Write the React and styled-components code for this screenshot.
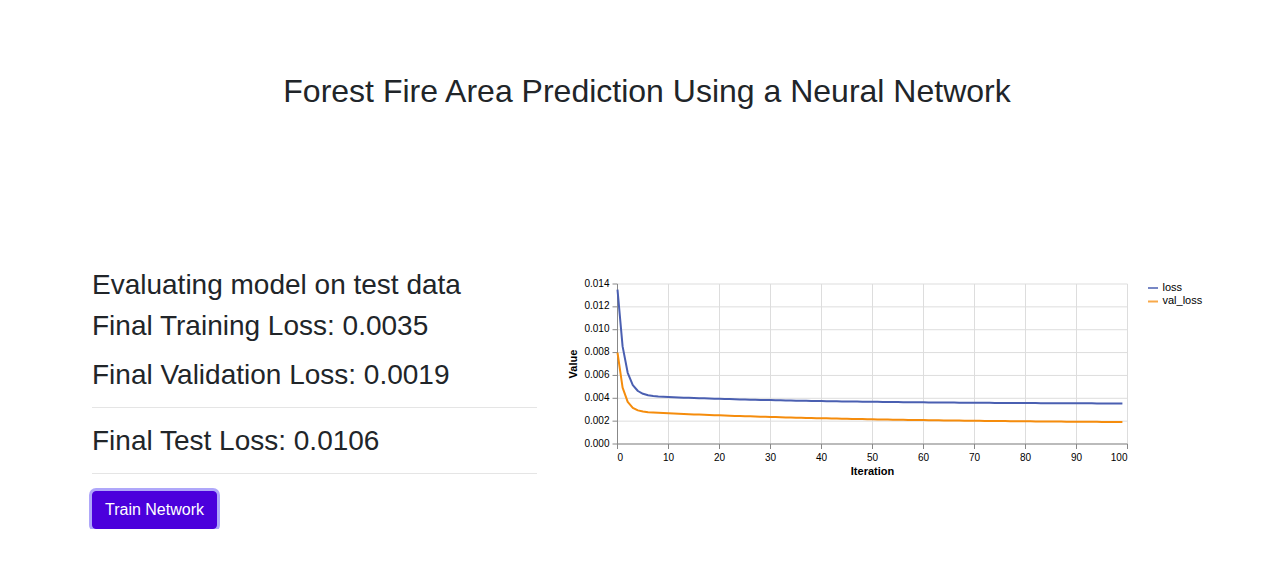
import React, { useMemo } from 'react';
import styled, { createGlobalStyle } from 'styled-components';

const GlobalStyle = createGlobalStyle`
    body {
        margin: 0 ;
        background: #fff ;
        color: #212529 ;
        font-family: "Liberation Sans", Arial, sans-serif ;
    }
`;

// training history, 100 epochs
const history = Array.from({ length: 100 }, (_, i) => ({
    loss: 0.0035 + 0.0008 * Math.exp(-i / 35) + 0.0092 * Math.exp(-i / 1.3),
    val_loss: 0.0018 + 0.0011 * Math.exp(-i / 45) + 0.0051 * Math.exp(-i / 1.1),
}));

const PLOT = { x: 57.5, y: 11, w: 510, h: 160 };
const Y_MAX = 0.014;

const px = (i) => PLOT.x + (i / 100) * PLOT.w;
const py = (v) => PLOT.y + PLOT.h - (v / Y_MAX) * PLOT.h;

const SERIES = [
    { key: 'loss', color: '#4a5fb1' },
    { key: 'val_loss', color: '#f58c0c' },
];

function LossChart() {
    const paths = useMemo(() => SERIES.map((s) => ({
        ...s,
        d: history.map((h, i) => `${i ? 'L' : 'M'}${px(i).toFixed(2)},${py(h[s.key]).toFixed(2)}`).join(''),
    })), []);

    const xTicks = Array.from({ length: 11 }, (_, i) => i * 10);
    const yTicks = Array.from({ length: 8 }, (_, i) => i * 0.002);

    // first and last x labels are flushed to the plot edges
    const xAnchor = (t) => (t === 0 ? 'start' : t === 100 ? 'end' : 'middle');

    return (
        <ChartSvg width="660" height="215" viewBox="0 0 660 215">
            {xTicks.map((t) => (
                <line key={'gx' + t} x1={px(t)} x2={px(t)} y1={PLOT.y} y2={PLOT.y + PLOT.h} stroke="#ddd" />
            ))}
            {yTicks.map((t) => (
                <line key={'gy' + t} x1={PLOT.x} x2={PLOT.x + PLOT.w} y1={py(t)} y2={py(t)} stroke="#ddd" />
            ))}

            <line x1={PLOT.x} x2={PLOT.x} y1={PLOT.y} y2={PLOT.y + PLOT.h} stroke="#888" />
            <line x1={PLOT.x} x2={PLOT.x + PLOT.w} y1={PLOT.y + PLOT.h} y2={PLOT.y + PLOT.h} stroke="#888" />

            {yTicks.map((t) => (
                <g key={'ty' + t}>
                    <line x1={PLOT.x - 5} x2={PLOT.x} y1={py(t)} y2={py(t)} stroke="#888" />
                    <TickLabel x={PLOT.x - 8} y={py(t)} textAnchor="end" dominantBaseline="middle">
                        {t.toFixed(3)}
                    </TickLabel>
                </g>
            ))}
            {xTicks.map((t) => (
                <g key={'tx' + t}>
                    <line x1={px(t)} x2={px(t)} y1={PLOT.y + PLOT.h} y2={PLOT.y + PLOT.h + 5} stroke="#888" />
                    <TickLabel x={px(t)} y={PLOT.y + PLOT.h + 16.5} textAnchor={xAnchor(t)}>{t}</TickLabel>
                </g>
            ))}

            <AxisTitle x={PLOT.x + PLOT.w / 2} y={202} textAnchor="middle">Iteration</AxisTitle>
            <AxisTitle x={17} y={PLOT.y + PLOT.h / 2} textAnchor="middle" transform={`rotate(-90 17 ${PLOT.y + PLOT.h / 2})`}>
                Value
            </AxisTitle>

            {paths.map((p) => (
                <path key={p.key} d={p.d} fill="none" stroke={p.color} strokeWidth="2" strokeLinejoin="round" />
            ))}

            {SERIES.map((s, i) => (
                <g key={'lg' + s.key}>
                    <line x1={588} x2={598} y1={15 + i * 13.5} y2={15 + i * 13.5} stroke={s.color} strokeWidth="2" strokeOpacity="0.75" />
                    <LegendLabel x={602.5} y={15 + i * 13.5} dominantBaseline="middle">{s.key}</LegendLabel>
                </g>
            ))}
        </ChartSvg>
    );
}

function App() {
    return (
        <Page>
            <GlobalStyle />
            <Title>Forest Fire Area Prediction Using a Neural Network</Title>
            <Container>
                <Results>
                    <Stat $gap={7}>Evaluating model on test data</Stat>
                    <Stat $gap={15}>Final Training Loss: 0.0035</Stat>
                    <Stat>Final Validation Loss: 0.0019</Stat>
                    <Rule $top={16} $bottom={16} />
                    <Stat>Final Test Loss: 0.0106</Stat>
                    <Rule $top={15} $bottom={17} />
                    <TrainButton type="button">Train Network</TrainButton>
                </Results>
                <ChartArea>
                    <LossChart />
                </ChartArea>
            </Container>
        </Page>
    );
}

const Page = styled.div`
    display: flex ;
    flex-direction: column ;
    padding-top: 72px ;
`;
const Title = styled.h2`
    margin: 0 ;
    padding-left: 24px ;
    font-size: 32px ;
    font-weight: 400 ;
    line-height: 1.2 ;
    text-align: center ;
    color: #212529 ;
`;
const Container = styled.div`
    display: flex ;
    align-items: flex-start ;
    gap: 23px ;
    width: 1086px ;
    margin: 158px auto 0 ;
`;
const Results = styled.div`
    width: 445px ;
    flex-shrink: 0 ;
    display: flex ;
    flex-direction: column ;
    align-items: flex-start ;
`;
const Stat = styled.h3`
    margin: 0 0 ${(p) => p.$gap || 0}px ;
    font-size: 28px ;
    font-weight: 400 ;
    line-height: 1.2 ;
`;
const Rule = styled.hr`
    align-self: stretch ;
    margin: ${(p) => p.$top}px 0 ${(p) => p.$bottom}px ;
    border: 0 ;
    border-top: 1px solid rgba(0, 0, 0, 0.1) ;
`;
const TrainButton = styled.button`
    font-family: "Liberation Sans", Arial, sans-serif ;
    font-size: 16px ;
    line-height: 1.5 ;
    padding: 6px 12px ;
    color: #fff ;
    background: #4b00dc ;
    border: 1px solid #4b00dc ;
    border-radius: 4px ;
    box-shadow: 0 0 0 3px rgba(110, 95, 245, 0.55) ;
    cursor: pointer ;
`;
const ChartArea = styled.div`
    margin-top: 5px ;
`;
const ChartSvg = styled.svg`
    display: block ;
    font-family: "Liberation Sans", Arial, sans-serif ;
`;
const TickLabel = styled.text`
    font-size: 10px ;
    fill: #000 ;
`;
const AxisTitle = styled.text`
    font-size: 11px ;
    font-weight: 700 ;
    fill: #000 ;
`;
const LegendLabel = styled.text`
    font-size: 11px ;
    fill: #000 ;
`;

export default App
